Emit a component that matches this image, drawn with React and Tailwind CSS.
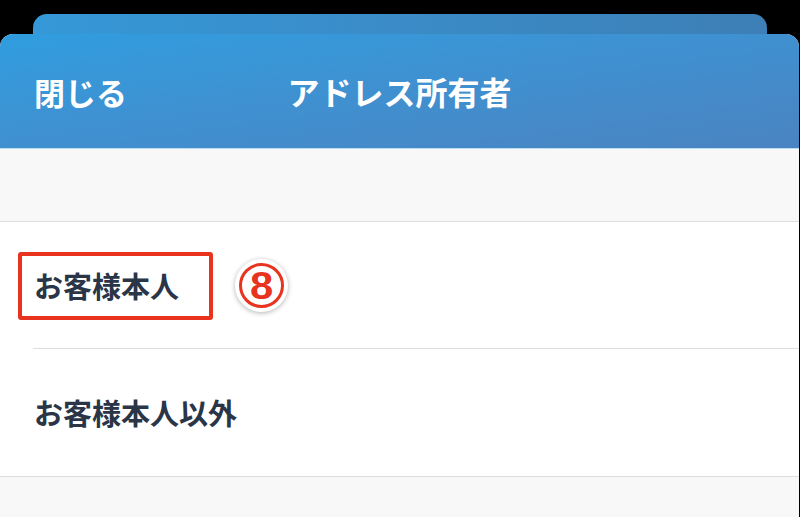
export default function App() {
  const font = { fontFamily: '"Noto Sans CJK JP", "Noto Sans", sans-serif' };
  return (
    <div className="w-[800px] h-[517px] bg-black overflow-hidden flex flex-col" style={font}>
      <div className="ml-[33px] w-[734px] mt-[14px] h-[20px] shrink-0 rounded-t-[14px] bg-gradient-to-r from-[#3598d8] to-[#3d7fb6]" />
      <div className="flex-1 w-[799px] rounded-t-[13px] overflow-hidden bg-[#f8f8f8] flex flex-col">
        <div className="h-[115px] shrink-0 bg-gradient-to-br from-[#2f9ddf] to-[#4a83c1] border-b border-[#b9def3] flex items-center relative">
          <span className="ml-[34px] text-[31px] font-bold text-white leading-none">閉じる</span>
          <span className="absolute left-0 right-0 text-center text-[32px] font-bold text-white leading-none">アドレス所有者</span>
        </div>
        <div className="h-[72px] shrink-0 bg-[#f8f8f9]" />
        <div className="bg-white border-t border-b border-[#dedede] shrink-0">
          <div className="h-[126px] flex items-center relative">
            <span className="ml-[34px] text-[29px] font-bold text-[#2b3548] leading-none">お客様本人</span>
            <div className="absolute left-[18px] top-[30px] w-[195px] h-[68px] border-4 border-[#e8331f] rounded-[3px]" />
            <div className="absolute left-[235px] top-[37px] w-[53px] h-[53px] rounded-full bg-white shadow-[0_1px_5px_rgba(0,0,0,0.3)] flex items-center justify-center">
              <div className="w-[45px] h-[45px] rounded-full border-[3px] border-[#e8331f] flex items-center justify-center">
                <span className="text-[38px] font-bold text-[#e8331f] leading-none scale-x-110 inline-block" style={{ fontFamily: '"Liberation Sans", sans-serif' }}>8</span>
              </div>
            </div>
          </div>
          <div className="ml-[33px] border-t border-[#dedede]" />
          <div className="h-[127px] flex items-center">
            <span className="ml-[34px] text-[29px] font-bold text-[#2b3548] leading-none">お客様本人以外</span>
          </div>
        </div>
      </div>
    </div>
  );
}
